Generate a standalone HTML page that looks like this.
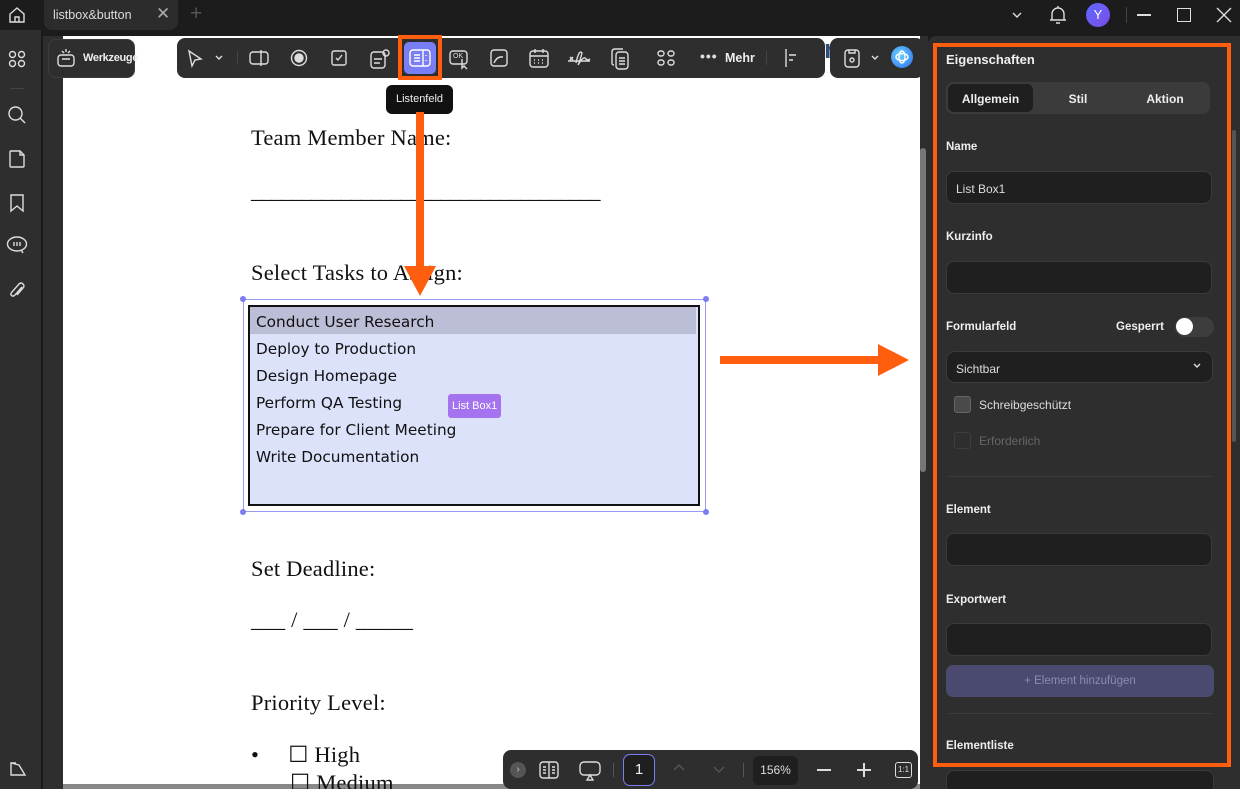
<!DOCTYPE html>
<html><head><meta charset="utf-8"><style>
*{box-sizing:border-box;margin:0;padding:0}
html,body{width:1240px;height:789px;overflow:hidden}
body{background:#1c1c1c;font-family:"Liberation Sans",sans-serif;position:relative;color:#fff}
.a{position:absolute}
.ic{position:absolute;stroke:#ddd;fill:none;stroke-width:1.4}
.doc{font-family:"Liberation Serif",serif;color:#111;font-size:22.5px;position:absolute;letter-spacing:0.2px}
.lb{font-family:"DejaVu Sans","Liberation Sans",sans-serif;font-size:15.3px;color:#111;position:absolute;left:256px}
.lbl{position:absolute;left:946px;font-size:11.5px;font-weight:bold;color:#eee}
.inp{position:absolute;left:946px;width:266px;height:33px;background:#1f1f1f;border:1px solid #3a3a3a;border-radius:8px;font-size:12px;color:#ddd;padding:10px 9px}
</style></head><body>
<!-- top bar -->
<svg class="ic" style="left:7px;top:5px" width="20" height="20" viewBox="0 0 20 20"><path d="M3 9 L10 3 L17 9 V17 H3Z M8 17 V12 H12 V17"/></svg>
<div class="a" style="left:44px;top:0;width:134px;height:30px;background:#2c2c2c;border-radius:0 0 8px 8px"></div>
<div class="a" style="left:53px;top:8px;font-size:12.5px;color:#ddd">listbox&amp;button</div>
<div class="a" style="left:156px;top:4px;font-size:17px;color:#aaa">✕</div>
<div class="a" style="left:190px;top:2px;font-size:21px;color:#555">+</div>
<svg class="ic" style="left:1010px;top:8px" width="14" height="14" viewBox="0 0 14 14"><path d="M3 5 L7 9 L11 5"/></svg>
<svg class="ic" style="left:1048px;top:4px" width="20" height="22" viewBox="0 0 20 22"><path d="M4 16 V10 A6 6 0 0 1 16 10 V16 H4 Z M2 16 H18 M8 19 H12 M10 2 V4"/></svg>
<div class="a" style="left:1086px;top:3px;width:24px;height:24px;border-radius:50%;background:linear-gradient(135deg,#5e6bff,#7a4be8);font-size:13px;text-align:center;line-height:24px">Y</div>
<div class="a" style="left:1126px;top:7px;width:1px;height:16px;background:#444"></div>
<div class="a" style="left:1137px;top:14px;width:14px;height:1.5px;background:#ddd"></div>
<div class="a" style="left:1177px;top:8px;width:14px;height:14px;border:1.5px solid #ddd"></div>
<svg class="ic" style="left:1216px;top:7px" width="16" height="16" viewBox="0 0 16 16"><path d="M1 1 L15 15 M15 1 L1 15"/></svg>

<!-- left sidebar -->
<div class="a" style="left:0;top:30px;width:41px;height:759px;background:#2e2e2e"></div>
<div class="a" style="left:41px;top:30px;width:2px;height:759px;background:#1a1a1a"></div>
<div class="a" style="left:43px;top:36px;width:20px;height:753px;background:#2e2e2e"></div>
<svg class="ic" style="left:8px;top:50px" width="18" height="18" viewBox="0 0 18 18"><circle cx="4.5" cy="4.5" r="3"/><circle cx="13.5" cy="4.5" r="3"/><circle cx="4.5" cy="13.5" r="3"/><circle cx="13.5" cy="13.5" r="3"/></svg>
<div class="a" style="left:10px;top:88px;width:14px;height:1px;background:#444"></div>
<svg class="ic" style="left:7px;top:105px" width="20" height="20" viewBox="0 0 20 20"><circle cx="8.5" cy="8.5" r="6.5"/><path d="M13 13 L18 18"/></svg>
<svg class="ic" style="left:8px;top:149px" width="18" height="20" viewBox="0 0 18 20"><path d="M3 2 H12 L16 6 V17 Q16 18 15 18 H3 Q2 18 2 17 V3 Q2 2 3 2Z M12 2 V6 H16"/></svg>
<svg class="ic" style="left:9px;top:193px" width="16" height="20" viewBox="0 0 16 20"><path d="M2 2 H14 V18 L8 13 L2 18Z"/></svg>
<svg class="ic" style="left:6px;top:235px" width="22" height="20" viewBox="0 0 22 20"><ellipse cx="11" cy="9" rx="9.5" ry="7"/><path d="M8 7 V11 M11 7 V11 M14 7 V11 M15 15 L17 18"/></svg>
<svg class="ic" style="left:8px;top:281px" width="18" height="20" viewBox="0 0 18 20"><path d="M14 6 L7 14 Q5 16 3.5 14.5 Q2 13 4 11 L11 3 Q13 1 15 3 Q17 5 15 7 L9 14"/></svg>
<svg class="ic" style="left:8px;top:760px" width="20" height="18" viewBox="0 0 20 18"><path d="M3 3 V15 H17 L11 5 Z M3 3 L8 3"/></svg>

<!-- canvas -->
<div class="a" style="left:63px;top:36px;width:857px;height:753px;background:#fff;overflow:hidden">
<div class="a" style="left:482px;top:-2px;font-family:'Liberation Sans';font-weight:bold;font-size:27px;line-height:30px;color:#2e4f7a;letter-spacing:1px;white-space:nowrap">Task Assignment Form</div>
</div>
<div class="a" style="left:920px;top:36px;width:8px;height:753px;background:#2e2e2e"></div>
<div class="a" style="left:920px;top:148px;width:6px;height:324px;background:#777;border-radius:3px"></div>
<div class="a" style="left:63px;top:784px;width:857px;height:5px;background:#888"></div>

<!-- werkzeuge -->
<div class="a" style="left:48px;top:39px;width:87px;height:39px;background:#2e2e2e;border:1px solid #3d3d3d;border-radius:8px"></div>
<svg class="ic" style="left:56px;top:48px" width="20" height="20" viewBox="0 0 20 20"><rect x="2" y="7" width="16" height="11" rx="3"/><path d="M6 11 H14 M6 3 L8 5 M10 1 V4 M14 3 L12 5"/></svg>
<div class="a" style="left:83px;top:52px;font-size:11px;font-weight:bold;color:#eee;letter-spacing:-0.3px">Werkzeuge</div>

<!-- main toolbar -->
<div class="a" style="left:177px;top:38px;width:648px;height:40px;background:#2e2e2e;border-radius:8px"></div>
<svg class="ic" style="left:186px;top:49px" width="18" height="20" viewBox="0 0 18 20"><path d="M3 2 L15 10 L9 11 L6 17 Z"/></svg>
<svg class="ic" style="left:214px;top:54px" width="10" height="8" viewBox="0 0 10 8"><path d="M2 2 L5 5 L8 2"/></svg>
<div class="a" style="left:237px;top:51px;width:1px;height:14px;background:#444"></div>
<svg class="ic" style="left:248px;top:49px" width="22" height="18" viewBox="0 0 22 18"><rect x="2" y="3" width="18" height="12" rx="3"/><path d="M13 1 V17"/></svg>
<svg class="ic" style="left:290px;top:49px" width="18" height="18" viewBox="0 0 18 18"><circle cx="9" cy="9" r="7.5"/><circle cx="9" cy="9" r="4" fill="#ddd"/></svg>
<svg class="ic" style="left:330px;top:49px" width="18" height="18" viewBox="0 0 18 18"><rect x="2" y="2" width="14" height="14" rx="2"/><path d="M6 9 L8 11 L12 6"/></svg>
<svg class="ic" style="left:369px;top:48px" width="22" height="22" viewBox="0 0 22 22"><rect x="2" y="4" width="14" height="16" rx="3"/><path d="M5 11 H13 M5 15 H11"/><rect x="14" y="2" width="6" height="6" rx="3"/></svg>
<div class="a" style="left:398px;top:35px;width:44px;height:45px;border:4px solid #ff5e0e;background:#2e2e2e"></div>
<div class="a" style="left:404px;top:42px;width:32px;height:32px;background:#7a7ef5;border-radius:5px"></div>
<svg class="ic" style="left:409px;top:48px;stroke:#fff" width="22" height="20" viewBox="0 0 22 20"><rect x="1" y="2" width="20" height="16" rx="3"/><path d="M14 2 V18 M5 7 H11 M5 10 H11 M5 13 H11 M17 7 V8 M17 12 V13"/></svg>
<svg class="ic" style="left:448px;top:48px" width="24" height="22" viewBox="0 0 24 22"><rect x="2" y="3" width="17" height="13" rx="3"/><path d="M14 11 L14 20 L16 18 L19 21"/></svg>
<div class="a" style="left:453px;top:53px;font-size:7px;color:#ddd">OK</div>
<svg class="ic" style="left:489px;top:48px" width="20" height="20" viewBox="0 0 20 20"><rect x="2" y="2" width="16" height="16" rx="3"/><path d="M5 15 Q8 8 14 9"/></svg>
<svg class="ic" style="left:528px;top:47px" width="22" height="22" viewBox="0 0 22 22"><rect x="2" y="4" width="18" height="16" rx="3"/><path d="M7 2 V6 M15 2 V6 M2 9 H20 M6 13 H7 M10 13 H11 M14 13 H15 M6 16 H7 M10 16 H11 M14 16 H15"/></svg>
<svg class="ic" style="left:566px;top:47px" width="26" height="22" viewBox="0 0 26 22"><path d="M2 14 H24 M4 10 L7 13 M7 10 L4 13 M10 16 Q13 2 16 6 Q14 14 12 18 Q18 8 20 12 Q21 14 24 12"/></svg>
<svg class="ic" style="left:609px;top:47px" width="22" height="24" viewBox="0 0 22 24"><rect x="7" y="5" width="12" height="17" rx="3"/><path d="M5 18 Q3 18 3 16 V5 Q3 2 6 2 H14 M10 11 H16 M10 14 H16 M10 17 H16"/></svg>
<svg class="ic" style="left:656px;top:49px" width="20" height="18" viewBox="0 0 20 18"><rect x="2" y="2" width="6" height="5" rx="2.5"/><rect x="12" y="2" width="6" height="5" rx="2.5"/><rect x="2" y="11" width="6" height="5" rx="2.5"/><rect x="12" y="11" width="6" height="5" rx="2.5"/></svg>
<div class="a" style="left:700px;top:48px;font-size:14px;color:#ddd;font-weight:bold;letter-spacing:1px">•••</div>
<div class="a" style="left:725px;top:51px;font-size:12.5px;font-weight:bold;color:#eee">Mehr</div>
<div class="a" style="left:766px;top:51px;width:1px;height:14px;background:#444"></div>
<svg class="ic" style="left:783px;top:48px" width="16" height="20" viewBox="0 0 16 20"><path d="M3 1 V19 M6 7 H13 M6 12 H10"/></svg>
<div class="a" style="left:830px;top:38px;width:94px;height:40px;background:#2e2e2e;border-radius:8px"></div>
<svg class="ic" style="left:842px;top:47px" width="20" height="22" viewBox="0 0 20 22"><rect x="3" y="3" width="14" height="17" rx="3"/><path d="M7 3 V6 H13 V3"/><circle cx="10" cy="13" r="2"/></svg>
<svg class="ic" style="left:870px;top:54px" width="10" height="8" viewBox="0 0 10 8"><path d="M2 2 L5 5 L8 2"/></svg>
<div class="a" style="left:891px;top:46px;width:22px;height:22px;border-radius:50%;background:radial-gradient(circle at 40% 40%,#6bd2ff,#2a6cf0)"></div>
<svg class="ic" style="left:894px;top:49px;stroke:#fff" width="16" height="16" viewBox="0 0 16 16"><ellipse cx="8" cy="8" rx="6" ry="3.5"/><ellipse cx="8" cy="8" rx="3" ry="6"/></svg>

<!-- tooltip -->
<div class="a" style="left:386px;top:85px;width:67px;height:29px;background:#111;border-radius:6px;font-size:11px;color:#eee;text-align:center;line-height:29px">Listenfeld</div>

<!-- doc text -->
<div class="doc" style="left:251px;top:125px">Team Member Name:</div>
<div class="doc" style="left:251px;top:178px;letter-spacing:-1.3px">___________________________________</div>
<div class="doc" style="left:251px;top:260px">Select Tasks to Assign:</div>
<div class="doc" style="left:251px;top:556px">Set Deadline:</div>
<div class="doc" style="left:251px;top:607px">___ / ___ / _____</div>
<div class="doc" style="left:251px;top:690px">Priority Level:</div>
<div class="doc" style="left:251px;top:742px">•&nbsp;&nbsp;&nbsp;&nbsp;&nbsp;☐ High</div>
<div class="doc" style="left:290px;top:770px">☐ Medium</div>

<!-- listbox -->
<div class="a" style="left:243px;top:299px;width:463px;height:213px;border:1px solid #9a9af0"></div>
<div class="a" style="left:240px;top:296px;width:6px;height:6px;border-radius:50%;background:#7d7df0"></div>
<div class="a" style="left:703px;top:296px;width:6px;height:6px;border-radius:50%;background:#7d7df0"></div>
<div class="a" style="left:240px;top:509px;width:6px;height:6px;border-radius:50%;background:#7d7df0"></div>
<div class="a" style="left:703px;top:509px;width:6px;height:6px;border-radius:50%;background:#7d7df0"></div>
<div class="a" style="left:248px;top:305px;width:452px;height:201px;border:2px solid #111;background:#dde2fb"></div>
<div class="a" style="left:250px;top:307px;width:446px;height:27px;background:#bcbdd6"></div>
<div class="lb" style="top:313px">Conduct User Research</div>
<div class="lb" style="top:340px">Deploy to Production</div>
<div class="lb" style="top:367px">Design Homepage</div>
<div class="lb" style="top:394px">Perform QA Testing</div>
<div class="lb" style="top:421px">Prepare for Client Meeting</div>
<div class="lb" style="top:448px">Write Documentation</div>
<div class="a" style="left:448px;top:394px;width:53px;height:24px;background:#a673f0;border-radius:3px;font-size:11px;color:#fff;line-height:24px;padding-left:4px">List Box1</div>

<!-- arrows -->
<div class="a" style="left:416px;top:112px;width:8px;height:158px;background:#ff5e0e"></div>
<svg class="a" style="left:404px;top:266px" width="32" height="30"><path d="M0 0 H32 L16 30Z" fill="#ff5e0e"/></svg>
<div class="a" style="left:720px;top:356px;width:162px;height:8px;background:#ff5e0e"></div>
<svg class="a" style="left:878px;top:344px" width="31" height="32"><path d="M0 0 L31 16 L0 32Z" fill="#ff5e0e"/></svg>

<!-- bottom bar -->
<div class="a" style="left:503px;top:750px;width:415px;height:39px;background:#2e2e2e;border-radius:8px"></div>
<div class="a" style="left:510px;top:762px;width:16px;height:16px;border-radius:50%;background:#555;font-size:10px;color:#ccc;text-align:center;line-height:16px">›</div>
<svg class="ic" style="left:539px;top:761px" width="20" height="18" viewBox="0 0 20 18"><rect x="1" y="1" width="18" height="16" rx="3"/><path d="M10 1 V17 M4 6 H7 M4 9 H7 M4 12 H7 M13 6 H16 M13 9 H16 M13 12 H16"/></svg>
<svg class="ic" style="left:579px;top:761px" width="22" height="20" viewBox="0 0 22 20"><rect x="1" y="1" width="20" height="13" rx="4"/><path d="M11 14 L8 19 H14 Z"/></svg>
<div class="a" style="left:613px;top:763px;width:1px;height:14px;background:#555"></div>
<div class="a" style="left:623px;top:754px;width:32px;height:32px;border:1.5px solid #7a7ef5;border-radius:7px;background:#1f1f1f;font-size:15px;color:#eee;text-align:center;line-height:30px">1</div>
<svg class="ic" style="left:672px;top:763px;stroke:#555" width="14" height="10" viewBox="0 0 14 10"><path d="M2 7 L7 2 L12 7"/></svg>
<svg class="ic" style="left:712px;top:765px;stroke:#555" width="14" height="10" viewBox="0 0 14 10"><path d="M2 2 L7 7 L12 2"/></svg>
<div class="a" style="left:743px;top:763px;width:1px;height:14px;background:#555"></div>
<div class="a" style="left:753px;top:756px;width:45px;height:29px;background:#1f1f1f;border-radius:6px;font-size:12px;color:#ddd;text-align:center;line-height:29px">156%</div>
<div class="a" style="left:817px;top:769px;width:14px;height:1.5px;background:#ddd"></div>
<div class="a" style="left:857px;top:769px;width:14px;height:1.5px;background:#ddd"></div>
<div class="a" style="left:863px;top:763px;width:1.5px;height:14px;background:#ddd"></div>
<div class="a" style="left:895px;top:762px;width:17px;height:16px;border:1.3px solid #ddd;border-radius:3px;font-size:8px;color:#ddd;text-align:center;line-height:14px">1:1</div>

<!-- right panel -->
<div class="a" style="left:928px;top:36px;width:312px;height:753px;background:#2e2e2e;border-radius:8px 0 0 0"></div>
<div class="a" style="left:933px;top:43px;width:298px;height:724px;border:4px solid #ff5e0e;background:#2e2e2e"></div>
<div class="a" style="left:1232px;top:130px;width:4px;height:312px;background:#555;border-radius:2px"></div>
<div class="a" style="left:946px;top:52px;font-size:13px;font-weight:bold;color:#eee">Eigenschaften</div>
<div class="a" style="left:946px;top:82px;width:264px;height:32px;background:#3b3b3b;border-radius:7px"></div>
<div class="a" style="left:948px;top:84px;width:85px;height:28px;background:#1f1f1f;border-radius:6px"></div>
<div class="a" style="left:948px;top:92px;width:85px;text-align:center;font-size:12px;font-weight:bold;color:#eee">Allgemein</div>
<div class="a" style="left:1048px;top:92px;width:60px;text-align:center;font-size:12px;font-weight:bold;color:#eee">Stil</div>
<div class="a" style="left:1135px;top:92px;width:60px;text-align:center;font-size:12px;font-weight:bold;color:#eee">Aktion</div>
<div class="lbl" style="top:141px">Name</div>
<div class="inp" style="top:171px">List Box1</div>
<div class="lbl" style="top:231px">Kurzinfo</div>
<div class="inp" style="top:261px"></div>
<div class="lbl" style="top:321px">Formularfeld</div>
<div class="a" style="left:1116px;top:321px;font-size:11.5px;font-weight:bold;color:#eee">Gesperrt</div>
<div class="a" style="left:1175px;top:317px;width:39px;height:20px;background:#3d3d3d;border-radius:10px"></div>
<div class="a" style="left:1176px;top:318px;width:17px;height:17px;background:#fff;border-radius:50%"></div>
<div class="inp" style="top:351px;border-radius:9px;height:32px;width:267px">Sichtbar</div>
<svg class="ic" style="left:1192px;top:362px" width="10" height="8" viewBox="0 0 10 8"><path d="M2 2 L5 5 L8 2"/></svg>
<div class="a" style="left:954px;top:396px;width:17px;height:17px;border:1px solid #666;background:#4a4a4a;border-radius:3px"></div>
<div class="a" style="left:979px;top:398px;font-size:12px;color:#ddd">Schreibgeschützt</div>
<div class="a" style="left:954px;top:432px;width:17px;height:17px;border:1px solid #3d3d3d;border-radius:3px"></div>
<div class="a" style="left:979px;top:434px;font-size:12px;color:#666">Erforderlich</div>
<div class="a" style="left:948px;top:476px;width:264px;height:1px;background:#3a3a3a"></div>
<div class="lbl" style="top:504px">Element</div>
<div class="inp" style="top:533px"></div>
<div class="lbl" style="top:594px">Exportwert</div>
<div class="inp" style="top:623px"></div>
<div class="a" style="left:946px;top:665px;width:268px;height:32px;background:#4a4a70;border-radius:7px;font-size:11.5px;color:#8c8cb0;text-align:center;line-height:32px">+ Element hinzufügen</div>
<div class="a" style="left:948px;top:713px;width:264px;height:1px;background:#3a3a3a"></div>
<div class="lbl" style="top:740px">Elementliste</div>
<div class="a" style="left:946px;top:770px;width:268px;height:19px;background:#1f1f1f;border:1px solid #3a3a3a;border-bottom:none;border-radius:8px 8px 0 0"></div>
</body></html>
